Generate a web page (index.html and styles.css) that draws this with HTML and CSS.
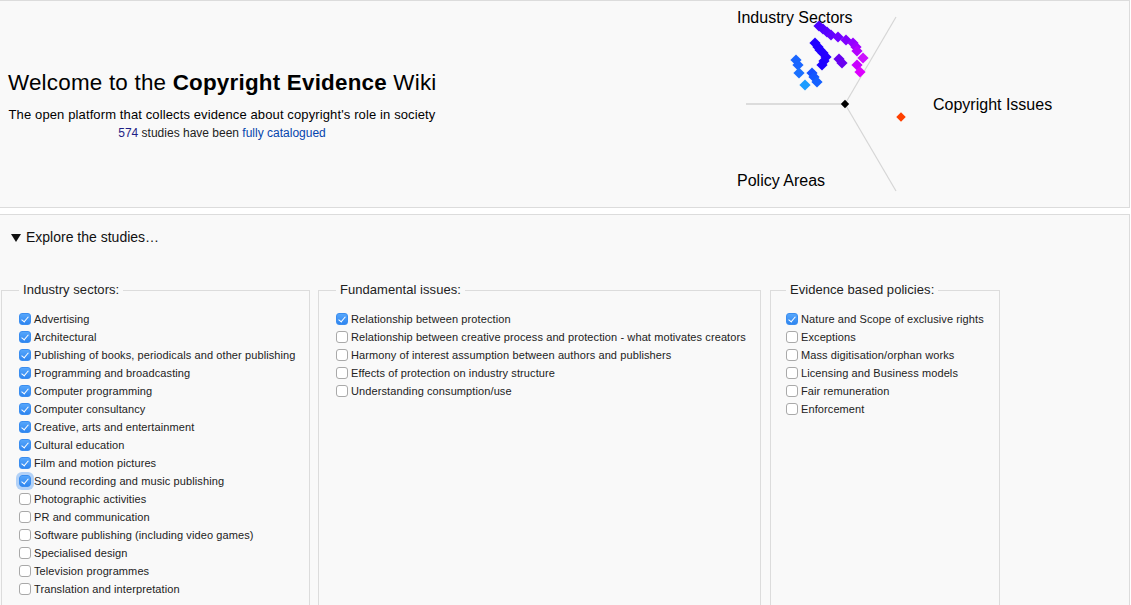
FILE: index.html
```html
<!DOCTYPE html>
<html>
<head>
<meta charset="utf-8">
<title>Copyright Evidence Wiki</title>
<link rel="stylesheet" href="styles.css">
</head>
<body>
<div class="hero">
  <div class="intro">
    <h1 class="title">Welcome to the <b>Copyright Evidence</b> Wiki</h1>
    <p class="subtitle">The open platform that collects evidence about copyright's role in society</p>
    <p class="stats"><span class="count">574</span> studies have been <a href="#" class="link">fully catalogued</a></p>
  </div>
  <svg class="chart" width="345" height="206" viewBox="725 1 345 206" xmlns="http://www.w3.org/2000/svg">
    <defs>
      <polygon id="d" points="0,-5.6 5.6,0 0,5.6 -5.6,0"/>
    </defs>
    <line x1="746" y1="104" x2="845" y2="104" stroke="#dcdcdc" stroke-width="2"/>
    <line x1="845" y1="104" x2="896" y2="17" stroke="#d6d6d6" stroke-width="1.2"/>
    <line x1="845" y1="104" x2="896" y2="191" stroke="#d6d6d6" stroke-width="1.2"/>
    <text x="737" y="23" class="axis">Industry Sectors</text>
    <text x="933" y="110" class="axis">Copyright Issues</text>
    <text x="737" y="186" class="axis">Policy Areas</text>
    <use href="#d" x="819" y="26" fill="#4a00ff"/>
    <use href="#d" x="823" y="29" fill="#5000ff"/>
    <use href="#d" x="827" y="32" fill="#5600ff"/>
    <use href="#d" x="831" y="35" fill="#6000ff"/>
    <use href="#d" x="838" y="37" fill="#6e00ff"/>
    <use href="#d" x="846" y="40" fill="#8000ff"/>
    <use href="#d" x="853" y="43" fill="#9400ff"/>
    <use href="#d" x="856" y="47" fill="#a000ff"/>
    <use href="#d" x="857" y="51" fill="#b400ff"/>
    <use href="#d" x="863" y="58" fill="#cc10ff"/>
    <use href="#d" x="857" y="65" fill="#c800ff"/>
    <use href="#d" x="860" y="72" fill="#dd00ff"/>
    <use href="#d" x="815" y="43" fill="#2000ff"/>
    <use href="#d" x="818" y="47" fill="#2000ff"/>
    <use href="#d" x="820" y="50" fill="#2200ff"/>
    <use href="#d" x="823" y="53" fill="#2200ff"/>
    <use href="#d" x="826" y="57" fill="#2600ff"/>
    <use href="#d" x="824" y="61" fill="#2200ff"/>
    <use href="#d" x="822" y="65" fill="#1e00ff"/>
    <use href="#d" x="839" y="59" fill="#6600ee"/>
    <use href="#d" x="842" y="63" fill="#6a00f0"/>
    <use href="#d" x="796" y="60" fill="#1a66ff"/>
    <use href="#d" x="798" y="65" fill="#1a66ff"/>
    <use href="#d" x="799" y="73" fill="#1a70ff"/>
    <use href="#d" x="812" y="73" fill="#1450ff"/>
    <use href="#d" x="814" y="77" fill="#1458ff"/>
    <use href="#d" x="817" y="82" fill="#1460ff"/>
    <use href="#d" x="805" y="85" fill="#1a9cff"/>
    <use href="#d" x="845" y="104" fill="#000" transform="translate(845 104) scale(0.75) translate(-845 -104)"/>
    <use href="#d" x="901" y="117" fill="#ff4000" transform="translate(901 117) scale(0.85) translate(-901 -117)"/>
  </svg>
</div>

<div class="explore">
  <div class="summary"><span class="tri"></span>Explore the studies…</div>
  <div class="groups">
    <fieldset class="group g1">
      <legend class="legend">Industry sectors:</legend>
      <div class="item"><span class="box on"></span>Advertising</div>
      <div class="item"><span class="box on"></span>Architectural</div>
      <div class="item"><span class="box on"></span>Publishing of books, periodicals and other publishing</div>
      <div class="item"><span class="box on"></span>Programming and broadcasting</div>
      <div class="item"><span class="box on"></span>Computer programming</div>
      <div class="item"><span class="box on"></span>Computer consultancy</div>
      <div class="item"><span class="box on"></span>Creative, arts and entertainment</div>
      <div class="item"><span class="box on"></span>Cultural education</div>
      <div class="item"><span class="box on"></span>Film and motion pictures</div>
      <div class="item"><span class="box on focus"></span>Sound recording and music publishing</div>
      <div class="item"><span class="box"></span>Photographic activities</div>
      <div class="item"><span class="box"></span>PR and communication</div>
      <div class="item"><span class="box"></span>Software publishing (including video games)</div>
      <div class="item"><span class="box"></span>Specialised design</div>
      <div class="item"><span class="box"></span>Television programmes</div>
      <div class="item"><span class="box"></span>Translation and interpretation</div>
    </fieldset>
    <fieldset class="group g2">
      <legend class="legend">Fundamental issues:</legend>
      <div class="item"><span class="box on"></span>Relationship between protection</div>
      <div class="item"><span class="box"></span>Relationship between creative process and protection - what motivates creators</div>
      <div class="item"><span class="box"></span>Harmony of interest assumption between authors and publishers</div>
      <div class="item"><span class="box"></span>Effects of protection on industry structure</div>
      <div class="item"><span class="box"></span>Understanding consumption/use</div>
    </fieldset>
    <fieldset class="group g3">
      <legend class="legend">Evidence based policies:</legend>
      <div class="item"><span class="box on"></span>Nature and Scope of exclusive rights</div>
      <div class="item"><span class="box"></span>Exceptions</div>
      <div class="item"><span class="box"></span>Mass digitisation/orphan works</div>
      <div class="item"><span class="box"></span>Licensing and Business models</div>
      <div class="item"><span class="box"></span>Fair remuneration</div>
      <div class="item"><span class="box"></span>Enforcement</div>
    </fieldset>
  </div>
</div>
</body>
</html>
```

FILE: styles.css
```css
html, body {
  margin: 0;
  padding: 0;
  background: #fff;
}
body {
  font-family: "Liberation Sans", Arial, Helvetica, sans-serif;
  color: #222;
  overflow: hidden;
  height: 605px;
}
.hero {
  display: flex;
  align-items: flex-start;
  height: 206px;
  margin-right: 1px;
  background: #f9f9f9;
  border: 1px solid #dcdcdc;
  border-left: 0;
}
.intro {
  width: 428px;
  padding: 69px 0 0 8px;
  text-align: center;
}
.title {
  margin: 0;
  font-size: 22.4px;
  letter-spacing: 0.22px;
  line-height: 26px;
  font-weight: normal;
  color: #000;
  white-space: nowrap;
}
.title b {
  font-weight: bold;
}
.subtitle {
  margin: 11px 0 0;
  font-size: 13px;
  letter-spacing: 0.12px;
  line-height: 16px;
  color: #000;
  white-space: nowrap;
}
.stats {
  margin: 3px 0 0;
  font-size: 12px;
  line-height: 15px;
  color: #222;
}
.count {
  color: #1f1f86;
}
.link {
  color: #0645ad;
  text-decoration: none;
}
.chart {
  display: block;
  margin-left: 289px;
}
.axis {
  font-family: "Liberation Sans", Arial, sans-serif;
  font-size: 16px;
  fill: #000;
}
.explore {
  display: flex;
  flex-direction: column;
  margin-top: 6px;
  margin-right: 1px;
  height: 500px;
  background: #f9f9f9;
  border: 1px solid #dcdcdc;
  border-left: 0;
  padding-top: 14px;
}
.summary {
  display: flex;
  align-items: center;
  padding-left: 11px;
  font-size: 14px;
  line-height: 17px;
  color: #111;
}
.tri {
  width: 0;
  height: 0;
  border-left: 5px solid transparent;
  border-right: 5px solid transparent;
  border-top: 8px solid #111;
  margin-right: 5px;
  margin-top: 1px;
}
.groups {
  flex: 1;
  display: flex;
  align-items: stretch;
  gap: 8px;
  margin-top: 36px;
  margin-left: 1px;
}
.group {
  box-sizing: border-box;
  margin: 0;
  padding: 12px 14px 20px 17px;
  border: 1px solid #dcdcdc;
  background: #f9f9f9;
  min-width: 0;
}
.g1 { width: 309px; }
.g2 { width: 443px; }
.g3 { width: 230px; padding-left: 15px; margin-left: 1px; }
.legend {
  padding: 0 4px;
  font-size: 13px;
  letter-spacing: 0.05px;
  line-height: 16px;
  color: #222;
}
.item {
  display: flex;
  align-items: center;
  height: 18px;
  font-size: 11px;
  letter-spacing: 0.1px;
  white-space: nowrap;
  color: #222;
}
.box {
  box-sizing: border-box;
  flex: none;
  width: 12px;
  height: 12px;
  margin: 0 3px 0 0;
  border: 1px solid #a9a9a9;
  border-radius: 3px;
  background: #fff;
  position: relative;
}
.box.on {
  border-color: #3b8ef0;
  background: linear-gradient(#56a6fb, #2f86f0);
}
.box.on::after {
  content: "";
  position: absolute;
  left: 3px;
  top: 1px;
  width: 3px;
  height: 6px;
  border: solid #fff;
  border-width: 0 1.5px 1.5px 0;
  transform: rotate(40deg);
}
.box.focus {
  box-shadow: 0 0 0 3px rgba(90, 160, 245, 0.45);
}
```
